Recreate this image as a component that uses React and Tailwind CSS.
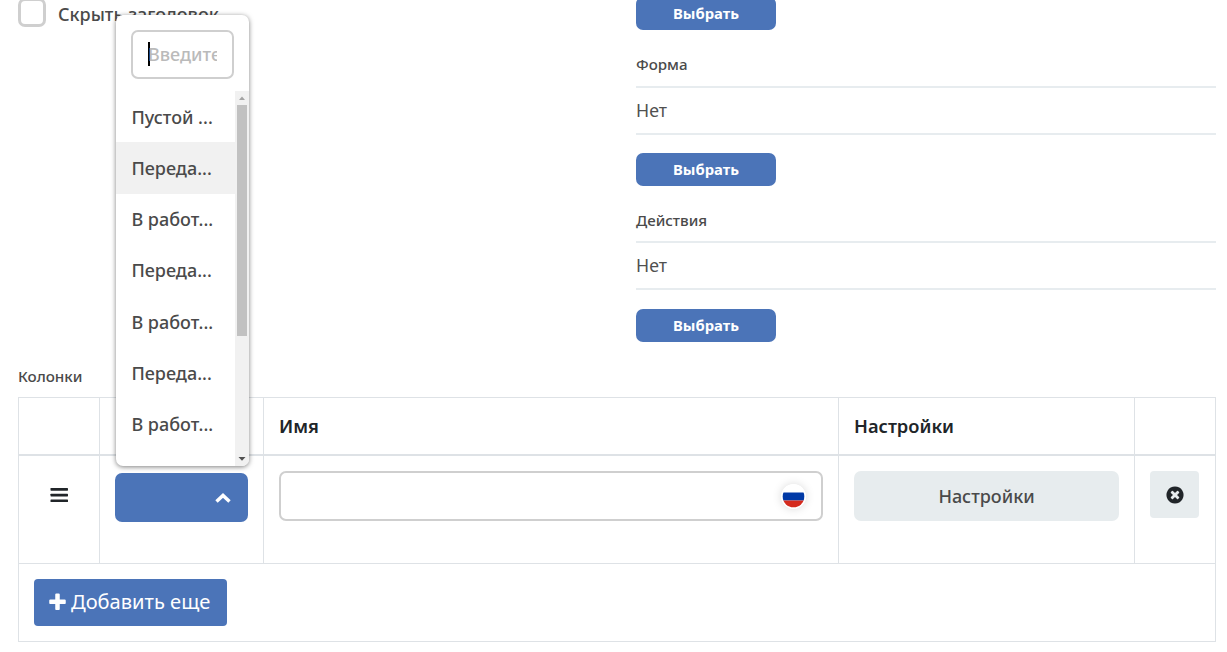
const PLUS = 'M1600 736v192q0 40-28 68t-68 28h-416v416q0 40-28 68t-68 28h-192q-40 0-68-28t-28-68v-416h-416q-40 0-68-28t-28-68v-192q0-40 28-68t68-28h416v-416q0-40 28-68t68-28h192q40 0 68 28t28 68v416h416q40 0 68 28t28 68z';
const TIMES = 'M1277 1122q0-26-19-45l-181-181 181-181q19-19 19-45 0-27-19-46l-90-90q-19-19-46-19-26 0-45 19l-181 181-181-181q-19-19-45-19-27 0-46 19l-90 90q-19 19-19 46 0 26 19 45l181 181-181 181q-19 19-19 45 0 27 19 46l90 90q19 19 46 19 26 0 45-19l181-181 181 181q19 19 45 19 27 0 46-19l90-90q19-19 19-46zm387-226q0 209-103 385.5t-279.5 279.5-385.5 103-385.5-103-279.5-279.5-103-385.5 103-385.5 279.5-279.5 385.5-103 385.5 103 279.5 279.5 103 385.5z';

function Icon({ d, className }) {
  return (
    <svg viewBox="0 0 1792 1792" fill="currentColor" className={className}>
      <path d={d} />
    </svg>
  );
}

function SelectButton() {
  return (
    <button className="block h-[33px] w-[140px] rounded-[7px] bg-[#4b74b8] text-[14.8px] leading-[33px] font-bold text-white">
      Выбрать
    </button>
  );
}

function Field({ label, className, valueClass }) {
  return (
    <div className={className}>
      <div className="h-[21px] text-[15.1px] leading-[21px] font-medium text-[#4a4a4a]">{label}</div>
      <div className={`h-[49px] border-y-2 border-[#e7ecef] text-[17.7px] leading-[45px] text-[#505050] ${valueClass}`}>
        Нет
      </div>
      <SelectButton />
    </div>
  );
}

const OPTIONS = ['Пустой ...', 'Переда...', 'В работ...', 'Переда...', 'В работ...', 'Переда...', 'В работ...'];

function Dropdown() {
  return (
    <div className="absolute top-[15px] left-[116px] flex h-[451px] w-[133px] flex-col overflow-hidden rounded-[7px] bg-white shadow-[0_1px_5px_rgba(0,0,0,0.5)]">
      <div className="mx-[15px] mt-[15px] flex h-[49px] shrink-0 items-center rounded-[7px] border-2 border-[#cfcfcf] px-[15px]">
        <div className="-mt-0.5 h-6 w-0.5 shrink-0 bg-black" />
        <div className="-mt-0.5 -ml-0.5 overflow-hidden text-[18px] leading-7 font-medium whitespace-nowrap text-[#bababa]">
          Введите
        </div>
      </div>
      <div className="mt-3 flex min-h-0 flex-1">
        <ul className="min-w-0 flex-1 overflow-hidden">
          {OPTIONS.map((text, i) => (
            <li
              key={i}
              className={`h-[51.25px] pt-[0.5px] pl-[15.4px] text-[18px] leading-[51.25px] font-medium whitespace-nowrap text-[#4a4a4a] ${i === 1 ? 'bg-[#f1f1f1]' : ''}`}
            >
              {text}
            </li>
          ))}
        </ul>
        <div className="flex w-[14px] flex-col items-center bg-[#f1f1f1]">
          <svg className="h-[14px] w-[14px] shrink-0" viewBox="0 0 14 14">
            <path d="M4 9 7 5.5 10 9z" fill="#a3a3a3" />
          </svg>
          <div className="h-[231px] w-[10px] bg-[#c1c1c1]" />
          <svg className="mt-auto h-[14px] w-[14px] shrink-0" viewBox="0 0 14 14">
            <path d="M3.5 5 7 8.7 10.5 5z" fill="#505050" />
          </svg>
        </div>
      </div>
    </div>
  );
}

export default function App() {
  return (
    <div className="relative h-[652px] w-[1227px] overflow-hidden bg-white font-['Noto_Sans','Open_Sans',sans-serif]">
      <div className="flex h-[366px] pl-[18px]">
        <div className="flex w-[618px] items-start">
          <div className="-mt-0.5 h-[29px] w-[28px] rounded-[7px] border-[3px] border-[#cfcfcf]" />
          <div className="ml-3 h-7 text-[18px] leading-7 font-medium text-[#4a4a4a]">Скрыть заголовок</div>
        </div>
        <div className="w-[580px]">
          <div className="-mt-[3px]">
            <SelectButton />
          </div>
          <Field label="Форма" className="mt-6" valueClass="mt-[11px] mb-[18px]" />
          <Field label="Действия" className="mt-6" valueClass="mt-[10px] mb-[19px]" />
        </div>
      </div>
      <div className="ml-[18px] h-[31px] text-[15.2px] leading-[21px] font-medium text-[#4a4a4a]">Колонки</div>
      <table className="ml-[18px] w-[1198px] table-fixed border-separate border-spacing-0 border-t border-l border-[#dee2e6] text-left text-[18px] text-[#212529]">
        <colgroup>
          <col className="w-[81px]" />
          <col className="w-[164px]" />
          <col className="w-[575px]" />
          <col className="w-[296px]" />
          <col className="w-[81px]" />
        </colgroup>
        <thead>
          <tr className="h-[58px] text-[18.3px]">
            <th className="border-r border-b-2 border-[#dee2e6]" />
            <th className="border-r border-b-2 border-[#dee2e6]" />
            <th className="border-r border-b-2 border-[#dee2e6] px-[15px] py-0 font-semibold">Имя</th>
            <th className="border-r border-b-2 border-[#dee2e6] px-[15px] py-0 font-semibold">Настройки</th>
            <th className="border-r border-b-2 border-[#dee2e6]" />
          </tr>
        </thead>
        <tbody>
          <tr className="h-[108px] align-top">
            <td className="border-r border-b border-[#dee2e6] pt-[28px] pl-[30px]">
              <svg viewBox="0 0 21 21" fill="currentColor" className="size-[21px]">
                <rect x="1.5" y="4" width="17.5" height="2.7" rx="0.6" />
                <rect x="1.5" y="9.7" width="17.5" height="2.7" rx="0.6" />
                <rect x="1.5" y="15.4" width="17.5" height="2.7" rx="0.6" />
              </svg>
            </td>
            <td className="border-r border-b border-[#dee2e6] px-[15px] pt-[17px]">
              <button className="flex h-[49px] w-[133px] items-center justify-end rounded-[7px] bg-[#4b74b8] pr-[17px]">
                <svg className="h-[10px] w-4" viewBox="0 0 16 10" fill="none" stroke="white" strokeWidth="3.5">
                  <path d="M1.5 8.5 8 2.5 14.5 8.5" />
                </svg>
              </button>
            </td>
            <td className="border-r border-b border-[#dee2e6] px-[15px] pt-[15px]">
              <div className="flex h-[50px] items-center justify-end rounded-[7px] border-2 border-[#cfcfcf] pr-[15px]">
                <svg
                  className="size-[25px] rounded-full shadow-[0_0_10px_rgba(0,0,0,0.15)]"
                  viewBox="0 0 25 25"
                >
                  <clipPath id="flag">
                    <circle cx="12.5" cy="12.5" r="10.8" />
                  </clipPath>
                  <circle cx="12.5" cy="12.5" r="12.5" fill="white" />
                  <g clipPath="url(#flag)">
                    <path d="M0 8.5h25v8H0z" fill="#0039a6" />
                    <path d="M0 16.5h25V25H0z" fill="#d52b1e" />
                  </g>
                </svg>
              </div>
            </td>
            <td className="border-r border-b border-[#dee2e6] px-[15px] pt-[15px]">
              <button className="h-[50px] w-[265px] rounded-[7px] bg-[#e7ecee] text-[18px] font-medium text-[#4a4a4a]">
                Настройки
              </button>
            </td>
            <td className="border-r border-b border-[#dee2e6] px-[15px] pt-[15px]">
              <button className="flex h-[47px] w-[49px] items-center justify-center rounded-[4px] bg-[#e7ecee]">
                <Icon d={TIMES} className="size-[20px]" />
              </button>
            </td>
          </tr>
          <tr className="h-[78px]">
            <td colSpan={5} className="border-r border-b border-[#dee2e6] px-[15px] py-0">
              <button className="flex h-[47px] w-[193px] items-center rounded-[4px] bg-[#4b74b8] pb-px pl-[13px] text-[20.1px] text-white">
                <Icon d={PLUS} className="mr-[3px] size-[21px]" />
                Добавить еще
              </button>
            </td>
          </tr>
        </tbody>
      </table>
      <Dropdown />
    </div>
  );
}
